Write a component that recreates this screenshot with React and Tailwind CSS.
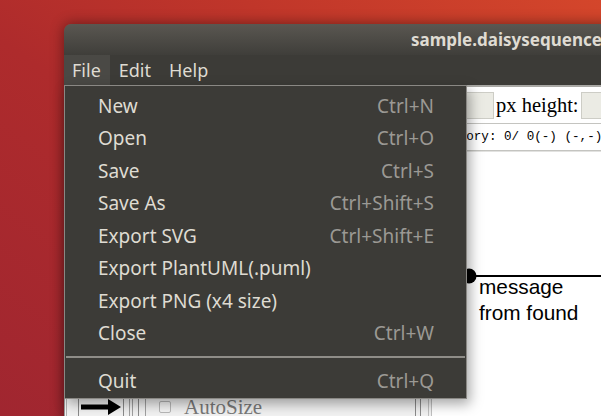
import React from 'react';

const menuItems = [
  { label: 'New', shortcut: 'Ctrl+N' },
  { label: 'Open', shortcut: 'Ctrl+O' },
  { label: 'Save', shortcut: 'Ctrl+S' },
  { label: 'Save As', shortcut: 'Ctrl+Shift+S' },
  { label: 'Export SVG', shortcut: 'Ctrl+Shift+E' },
  { label: 'Export PlantUML(.puml)', shortcut: '' },
  { label: 'Export PNG (x4 size)', shortcut: '' },
  { label: 'Close', shortcut: 'Ctrl+W' },
];

function MenuRow({ label, shortcut }) {
  return (
    <div className="h-[32.5px] flex items-center justify-between pl-[33px] pr-[32px]">
      <span className="text-[#dfdbd2]">{label}</span>
      <span className="text-[#9b9994]">{shortcut}</span>
    </div>
  );
}

function FileMenu() {
  return (
    <div className="absolute left-[64px] top-[85px] w-[403px] h-[314px] bg-[#3c3b37] border border-[#8a8884] shadow-[3px_5px_12px_rgba(0,0,0,0.35)] pt-[4px] font-['Noto_Sans',sans-serif] text-[19px] leading-none">
      {menuItems.map((item) => (
        <MenuRow key={item.label} label={item.label} shortcut={item.shortcut} />
      ))}
      <div className="h-[15px] flex items-center px-[1px]">
        <div className="h-[2px] w-full bg-[#8f8d88] mt-[-2px]" />
      </div>
      <MenuRow label="Quit" shortcut="Ctrl+Q" />
    </div>
  );
}

function Arrow() {
  return (
    <svg width="40" height="16" viewBox="0 0 40 16">
      <rect x="0" y="5.5" width="30" height="5" fill="#000" />
      <polygon points="27,0 40,8 27,16" fill="#000" />
    </svg>
  );
}

export default function App() {
  return (
    <div className="relative w-[601px] h-[416px] overflow-hidden bg-[linear-gradient(35deg,#a02630_0%,#ae2b2c_45%,#c0362a_70%,#d4462b_100%)] pl-[64px] pt-[24px]">
      {/* window */}
      <div className="w-[640px] h-[420px] flex flex-col rounded-tl-[7px] overflow-hidden shadow-[0_0_14px_rgba(0,0,0,0.45)]">
        {/* title bar */}
        <div className="h-[31px] shrink-0 bg-[linear-gradient(#5a5751,#3f3e3a)] flex items-center pl-[347px] font-['Noto_Sans',sans-serif] font-bold text-[17px] text-[#dfdbd2] whitespace-nowrap">
          sample.daisysequence - DaisySequence
        </div>

        {/* menubar */}
        <div className="h-[30px] shrink-0 bg-[#3c3b37] flex font-['Noto_Sans',sans-serif] text-[18px] text-[#dfdbd2]">
          <div className="pl-[8px] pr-[9px] flex items-center bg-[#4a4945]">File</div>
          <div className="px-[9px] flex items-center">Edit</div>
          <div className="px-[9px] flex items-center">Help</div>
        </div>

        {/* toolbar */}
        <div className="h-[38px] shrink-0 bg-white border-t-[2px] border-[#a9a8a4] flex items-center pl-[401px] font-['Liberation_Serif',serif] text-[20.5px] text-black">
          <div className="w-[29px] h-[27px] bg-[#ebebe4] border border-[#cdcdc6]" />
          <span className="ml-[2px] mr-[2px] leading-none">px height:</span>
          <div className="w-[60px] h-[27px] bg-[#ebebe4] border border-[#cdcdc6]" />
        </div>

        {/* status */}
        <div className="h-[28px] shrink-0 bg-white border-y border-[#c4c4c0] flex items-center pl-[372px] font-['Liberation_Mono',monospace] text-[12.6px] text-black whitespace-nowrap">
          History: 0/ 0(-) (-,-)
        </div>

        <div className="flex-1 flex border-t border-[#e2e2e0]">
          {/* left palette panel */}
          <div className="w-[368px] shrink-0 bg-[#f2f2f2] flex flex-col">
            <div className="h-[244px]" />
            <div className="h-[22px] flex items-center">
              <div className="h-full w-[2px] border-l border-[#9a9a9a]" />
              <div className="h-full w-[12px] border-l border-[#b0b0b0]" />
              <div className="h-full pl-[2px] pr-[2px] border-l border-[#8a8a8a] flex items-center">
                <Arrow />
              </div>
              <div className="h-full w-[6px] border-l border-[#8a8a8a]" />
              <div className="h-full w-[3px] border-l border-[#a0a0a0]" />
              <div className="h-full w-[6px] border-l border-[#a0a0a0]" />
              <div className="h-full w-[7px] border-l border-[#8a8a8a]" />
              <div className="h-full pl-[13px] border-l border-[#a0a0a0] flex items-center gap-[13px]">
                <div className="w-[12px] h-[12px] rounded-[2px] border border-[#b8b8b8] bg-[#f6f6f6]" />
                <span className="font-['Liberation_Serif',serif] text-[21px] text-[#7a7a7a] leading-none">AutoSize</span>
              </div>
              <div className="flex-1" />
              <div className="h-full w-[5px] border-l border-[#8a8a8a]" />
              <div className="h-full w-[8px] border-l border-[#8a8a8a]" />
              <div className="h-full w-[3px] border-l border-[#c0c0c0]" />
              <div className="h-full w-[1px] border-l border-[#c0c0c0]" />
            </div>
          </div>

          {/* diagram canvas */}
          <div className="relative flex-1 bg-white">
            <svg className="absolute left-[29px] top-[115px]" width="200" height="20" viewBox="0 0 200 20">
              <circle cx="8" cy="9" r="7.5" fill="#000" />
              <rect x="8" y="8" width="192" height="2" fill="#000" />
            </svg>
            <div className="absolute left-[47px] top-[122px] font-['Liberation_Sans',sans-serif] text-[20.8px] leading-[26px] text-black">
              message
              <br />
              from found
            </div>
          </div>
        </div>
      </div>

      <FileMenu />
    </div>
  );
}
